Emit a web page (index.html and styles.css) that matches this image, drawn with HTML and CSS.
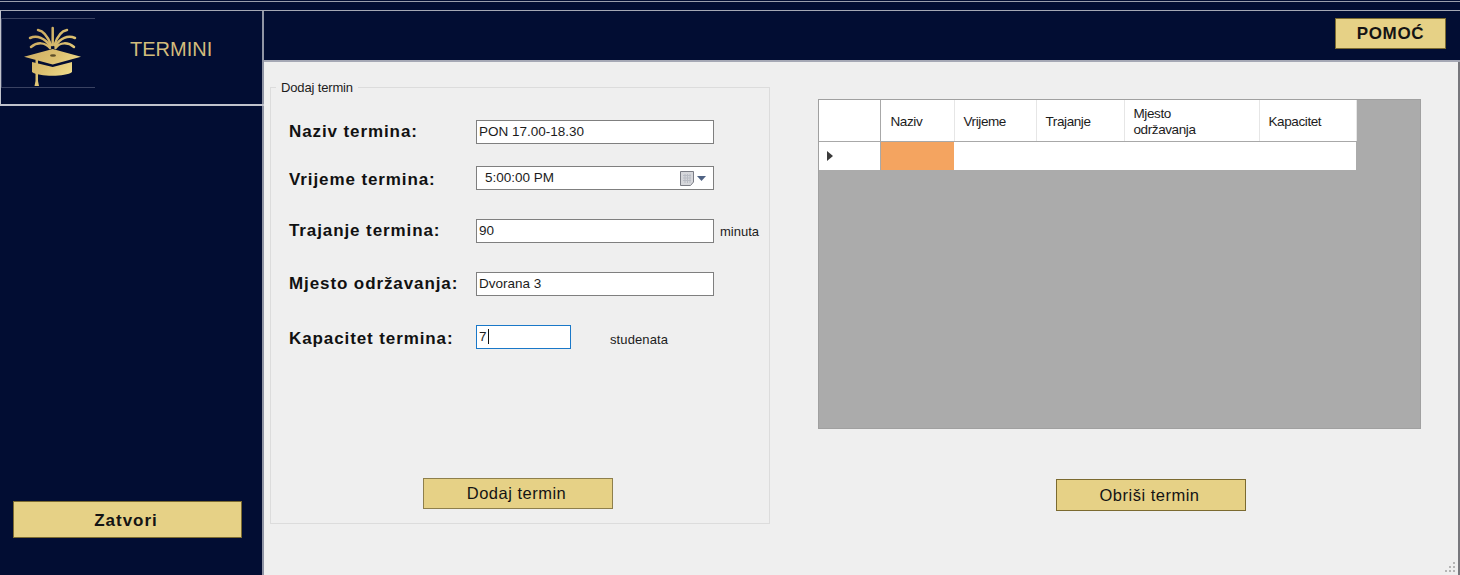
FILE: index.html
```html
<!DOCTYPE html>
<html lang="en">
<head>
  <meta charset="UTF-8" />
  <meta name="viewport" content="width=device-width, initial-scale=1" />
  <title>Termini</title>
  <link rel="stylesheet" href="styles.css">
</head>
<body>
  <div class="topstrip"></div>

  <div class="window">
    <aside class="sidebar">
      <div class="brand">
        <svg class="logo" width="94" height="70" viewBox="0 0 94 70">
          <defs>
            <linearGradient id="gold" gradientUnits="userSpaceOnUse" x1="23" y1="10" x2="75" y2="60">
              <stop offset="0" stop-color="#c6a45c" />
              <stop offset="0.6" stop-color="#dcc070" />
              <stop offset="1" stop-color="#f5e391" />
            </linearGradient>
          </defs>
          <path class="logo-frame" d="M0.500 70V0.500H94M0 69.500H94" />
          <g class="feathers">
            <path d="M51.700 10V27" />
            <path d="M50 27C47 19 43 13 37 12" />
            <path d="M49 28C44 20 36 17 29 20" />
            <path d="M49 30C44 24 36 24 30 29" />
            <path d="M53.500 27C56 19 60 13 66 12" />
            <path d="M54.500 28C59 20 67 17 74 20" />
            <path d="M54.500 30C59 24 67 24 73 29" />
          </g>
          <g fill="url(#gold)">
            <path d="M31 44L51.700 49L71 44V54C65 59 38 59 31 54Z" />
            <path d="M23 38.700L51.700 31L80 38.700L51.700 46.500Z" />
            <path d="M34.500 42H37V63L38 68H33.500L34.500 63Z" />
          </g>
          <ellipse cx="52" cy="37.500" rx="3" ry="1.200" fill="#5d4f2a" />
        </svg>
        <span class="brand-title">TERMINI</span>
      </div>
      <button class="btn btn-close">Zatvori</button>
    </aside>

    <div class="content">
      <header class="topbar">
        <button class="btn btn-help">POMOĆ</button>
      </header>

      <main class="panels">
        <section class="groupbox">
          <span class="legend">Dodaj termin</span>
          <div class="form">
            <div class="row">
              <label>Naziv termina:</label>
              <div class="field">PON 17.00-18.30</div>
            </div>
            <div class="row row-time">
              <label>Vrijeme termina:</label>
              <div class="field field-time">
                <span>5:00:00 PM</span>
                <svg class="cal" width="26" height="15" viewBox="0 0 26 15">
                  <path d="M0.500 0.500H13.500V11L10.500 14.500H0.500Z" fill="#d6d7db" stroke="#7b7d85" />
                  <path d="M3 4.500H11M3 7H11M3 9.500H11M5 3V12M7.500 3V12M10 3V12" stroke="#b9bcc4" />
                  <path d="M17 5H26L21.500 10Z" fill="#4f6283" />
                </svg>
              </div>
            </div>
            <div class="row">
              <label>Trajanje termina:</label>
              <div class="field">90</div>
              <span class="unit">minuta</span>
            </div>
            <div class="row">
              <label>Mjesto održavanja:</label>
              <div class="field">Dvorana 3</div>
            </div>
            <div class="row row-cap">
              <label>Kapacitet termina:</label>
              <div class="field field-num">7<span class="caret"></span></div>
              <span class="unit unit-far">studenata</span>
            </div>
          </div>
          <button class="btn btn-add">Dodaj termin</button>
        </section>

        <section class="list">
          <div class="grid-wrap">
            <table class="grid">
              <thead>
                <tr>
                  <th class="col-head"></th>
                  <th class="col-name">Naziv</th>
                  <th class="col-time">Vrijeme</th>
                  <th class="col-len">Trajanje</th>
                  <th class="col-place">Mjesto<br>održavanja</th>
                  <th class="col-cap">Kapacitet</th>
                </tr>
              </thead>
              <tbody>
                <tr>
                  <td class="row-head"><span class="arrow"></span></td>
                  <td class="cell-active"></td>
                  <td></td>
                  <td></td>
                  <td></td>
                  <td></td>
                </tr>
              </tbody>
            </table>
          </div>
          <button class="btn btn-delete">Obriši termin</button>
        </section>
      </main>

      <svg class="grip" width="12" height="12" viewBox="0 0 12 12">
        <path d="M8 1h2v2H8zM4 5h2v2H4zM8 5h2v2H8zM0 9h2v2H0zM4 9h2v2H4zM8 9h2v2H8z" fill="#b5b5b5" />
      </svg>
    </div>
  </div>
</body>
</html>
```

FILE: styles.css
```css
* {
  box-sizing: border-box;
}

body {
  margin: 0;
  width: 1460px;
  height: 575px;
  overflow: hidden;
  font-family: "Liberation Sans", Arial, sans-serif;
  font-size: 13.5px;
  color: #1c1c1c;
  background: #020d33;
}

.topstrip {
  height: 9px;
  margin-top: 1px;
  border-top: 1px solid #9a9dac;
}

.window {
  display: flex;
  height: 565px;
}

/* left column */
.sidebar {
  width: 264px;
  flex-shrink: 0;
  display: flex;
  flex-direction: column;
  justify-content: space-between;
  border-right: 2px solid #9095a5;
  background: #020d33;
}

.brand {
  height: 96px;
  display: flex;
  align-items: center;
  width: 264px;
  border-top: 1px solid #a5a8b5;
  border-bottom: 2px solid #c0c2cc;
  border-left: 1px solid #c0c2cc;
}

.logo {
  flex-shrink: 0;
  align-self: flex-start;
  margin-top: 7px;
}

.logo-frame {
  fill: none;
  stroke: #3a4262;
}

.feathers {
  fill: none;
  stroke: url(#gold);
  stroke-width: 2.500;
  stroke-linecap: round;
}

.brand-title {
  margin-left: 35px;
  margin-top: -17px;
  font-size: 20px;
  color: #d3bc7c;
}

.btn {
  font-family: inherit;
  background: #e6d186;
  border: 1px solid #7b6a30;
  color: #141414;
  padding: 0;
}

.btn-close {
  width: 229px;
  height: 37px;
  margin: 0 0 37px 13px;
  padding: 2px 3px 0 0;
  font-size: 17px;
  font-weight: bold;
  letter-spacing: 1px;
}

/* right side */
.content {
  flex: 1;
  position: relative;
  display: flex;
  flex-direction: column;
  background: #efefef;
  border-right: 2px solid #77777c;
}

.topbar {
  height: 52px;
  margin-right: -2px;
  display: flex;
  justify-content: flex-end;
  align-items: flex-start;
  padding: 7px 14px 0 0;
  background: #020d33;
  border-top: 1px solid #a5a8b5;
  border-bottom: 2px solid #a5a8b5;
}

.btn-help {
  width: 111px;
  height: 31px;
  font-size: 17px;
  font-weight: bold;
  letter-spacing: 0.7px;
}

.panels {
  flex: 1;
  display: flex;
  padding: 25px 0 0 6px;
}

.groupbox {
  position: relative;
  width: 500px;
  height: 437px;
  border: 1px solid #dcdcdc;
  display: flex;
  flex-direction: column;
}

.legend {
  position: absolute;
  left: 5px;
  top: -8px;
  padding: 0 5px;
  background: #efefef;
  font-size: 13px;
  line-height: 16px;
  letter-spacing: -0.15px;
}

.form {
  display: flex;
  flex-direction: column;
  gap: 29px;
  padding: 32px 0 0 18px;
}

.row {
  display: flex;
  align-items: center;
  height: 24px;
}

.row-time {
  margin-top: -7px;
}

.row label {
  width: 187px;
  flex-shrink: 0;
  font-size: 17px;
  font-weight: bold;
  color: #111;
  letter-spacing: 0.9px;
}

.row-time label,
.row-cap label,
.row-cap .unit {
  margin-top: 4px;
}

.field {
  width: 238px;
  height: 24px;
  padding-left: 2px;
  line-height: 22px;
  background: #fff;
  border: 1px solid #7f7f7f;
}

.field-time {
  display: flex;
  align-items: center;
  justify-content: space-between;
  padding: 0 7px 0 8px;
}

.field-num {
  width: 95px;
  border-color: #1a78c8;
}

.caret {
  display: inline-block;
  width: 1px;
  height: 15px;
  margin-left: 1px;
  vertical-align: -3px;
  background: #111;
}

.unit {
  margin-left: 6px;
  font-size: 13px;
}

.unit-far {
  margin-left: 39px;
  letter-spacing: 0.1px;
}

.btn-add {
  position: absolute;
  left: 152px;
  top: 390px;
  width: 190px;
  height: 31px;
  padding-right: 3px;
  font-size: 16.500px;
  letter-spacing: 0.5px;
  border-color: #8e7f4c;
}

.list {
  margin-left: 48px;
  padding-top: 12px;
  display: flex;
  flex-direction: column;
}

.grid-wrap {
  width: 603px;
  height: 330px;
  background: #ababab;
  border: 1px solid #a0a0a0;
}

.grid {
  border-collapse: collapse;
  table-layout: fixed;
  width: 537px;
}

.grid th {
  height: 41px;
  padding: 3px 0 0 9px;
  font-weight: normal;
  font-size: 13.500px;
  line-height: 16px;
  text-align: left;
  letter-spacing: -0.4px;
  background: #fff;
  border-right: 1px solid #e6e6e6;
  border-bottom: 1px solid #a8a8a8;
}

.grid td {
  height: 29px;
  padding: 0;
  background: #fff;
}

.grid .col-head {
  width: 61px;
  border-right: 1px solid #a8a8a8;
}

.grid .col-name {
  width: 74px;
  padding-left: 10px;
}

.col-time {
  width: 82px;
}

.col-len {
  width: 88px;
}

.col-place {
  width: 135px;
}

.col-cap {
  width: 97px;
}

.grid .row-head {
  padding-left: 8px;
  border-right: 1px solid #a8a8a8;
}

.arrow {
  display: block;
  width: 0;
  height: 0;
  border-left: 6px solid #3a3a3a;
  border-top: 5.500px solid transparent;
  border-bottom: 5.500px solid transparent;
}

.grid .cell-active {
  background: #f4a460;
}

.btn-delete {
  width: 190px;
  height: 32px;
  margin: 50px 0 0 238px;
  padding-right: 3px;
  font-size: 16.500px;
  letter-spacing: 0.5px;
}

.grip {
  position: absolute;
  right: 1px;
  bottom: 2px;
}
```
